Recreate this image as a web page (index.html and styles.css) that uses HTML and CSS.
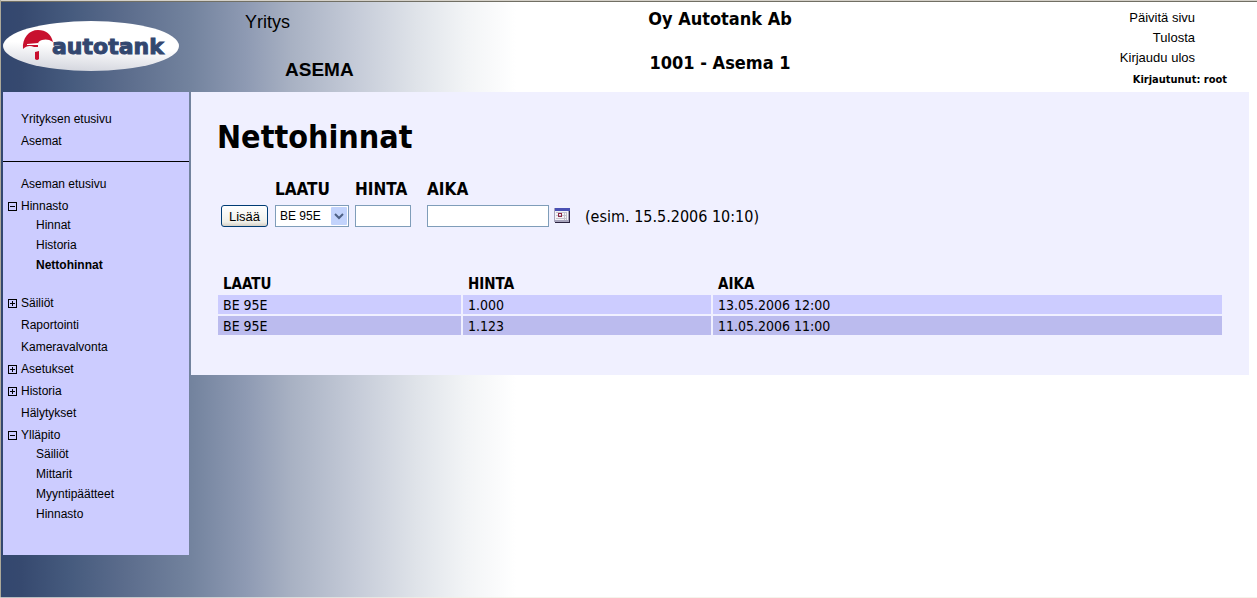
FILE: index.html
```html
<!DOCTYPE html>
<html lang="fi">
<head>
<meta charset="utf-8">
<meta name="viewport" content="width=device-width, initial-scale=1">
<title>Nettohinnat - Autotank</title>
<link rel="stylesheet" href="styles.css">
</head>
<body>
<header class="header">
  <a class="logo" href="#" aria-label="Autotank">
    <svg width="176" height="50" viewBox="0 0 176 50">
      <defs>
        <linearGradient id="shade" x1="0.6" y1="0" x2="0.4" y2="1">
          <stop offset="0.5" stop-color="#fff"/>
          <stop offset="1" stop-color="#d4d6de"/>
        </linearGradient>
      </defs>
      <ellipse cx="88" cy="25" rx="88" ry="25" fill="url(#shade)"/>
      <path d="M20 28C19 17 26 9 35 9C43 9 48 13 50 21C46 18 42 18 39 19C36 20 35 21 35 23L35 26L31 26C27 24 23 25 20 28Z" fill="#c8102e"/>
      <path d="M24 23L35 22L35 24L24 24Z" fill="#fff"/>
      <path d="M32 31L36 30L36 38Q34 40 32 38Z" fill="#c8102e"/>
      <text class="logo-text" x="49" y="33">autotank</text>
    </svg>
  </a>
  <div class="labels">
    <span class="label-company">Yritys</span>
    <span class="label-station">ASEMA</span>
  </div>
  <div class="names">
    <span>Oy Autotank Ab</span>
    <span>1001 - Asema 1</span>
  </div>
  <div class="session">
    <a href="#">Päivitä sivu</a>
    <a href="#">Tulosta</a>
    <a href="#">Kirjaudu ulos</a>
    <strong class="user">Kirjautunut: root</strong>
  </div>
</header>
<div class="layout">
  <nav class="sidebar">
    <ul class="menu menu-top">
      <li><a href="#">Yrityksen etusivu</a></li>
      <li><a href="#">Asemat</a></li>
    </ul>
    <ul class="menu">
      <li><a href="#">Aseman etusivu</a></li>
      <li><a class="node open" href="#">Hinnasto</a>
        <ul class="submenu">
          <li><a href="#">Hinnat</a></li>
          <li><a href="#">Historia</a></li>
          <li><a class="current" href="#">Nettohinnat</a></li>
        </ul>
      </li>
      <li><a class="node closed" href="#">Säiliöt</a></li>
      <li><a href="#">Raportointi</a></li>
      <li><a href="#">Kameravalvonta</a></li>
      <li><a class="node closed" href="#">Asetukset</a></li>
      <li><a class="node closed" href="#">Historia</a></li>
      <li><a href="#">Hälytykset</a></li>
      <li><a class="node open" href="#">Ylläpito</a>
        <ul class="submenu">
          <li><a href="#">Säiliöt</a></li>
          <li><a href="#">Mittarit</a></li>
          <li><a href="#">Myyntipäätteet</a></li>
          <li><a href="#">Hinnasto</a></li>
        </ul>
      </li>
    </ul>
  </nav>
  <main class="content">
    <h1>Nettohinnat</h1>
    <form class="price-form">
      <button class="add" type="button">Lisää</button>
      <div class="field field-grade">
        <label for="grade">LAATU</label>
        <span class="select-box">
          <select id="grade"><option>BE 95E</option></select>
          <svg class="arrow" width="16" height="18" viewBox="0 0 16 18">
            <rect width="16" height="18" rx="1" fill="#c2d3fc"/>
            <path d="M4 7L8 11L12 7" fill="none" stroke="#4d6185" stroke-width="2"/>
          </svg>
        </span>
      </div>
      <div class="field field-price">
        <label for="price">HINTA</label>
        <input id="price" type="text">
      </div>
      <div class="field field-time">
        <label for="time">AIKA</label>
        <input id="time" type="text">
      </div>
      <button class="calendar" type="button" aria-label="Kalenteri">
        <svg width="16" height="15" viewBox="0 0 16 15" shape-rendering="crispEdges">
          <rect x="1" y="1" width="15" height="14" fill="#2c2440"/>
          <rect width="15" height="14" fill="#a8a4bc"/>
          <rect x="1" y="3" width="13" height="9" fill="#f4f2f6"/>
          <rect x="1" width="15" height="3" fill="#4a50b4"/>
          <path d="M2 4H13M2 7H13M2 10H13M10 4V12M12 4V12" stroke="#c4c0cc"/>
          <path d="M4 5H8V9H4ZM5 6V8H7V6Z" fill="#8c2848" fill-rule="evenodd"/>
        </svg>
      </button>
      <span class="hint">(esim. 15.5.2006 10:10)</span>
    </form>
    <table class="prices">
      <colgroup><col class="col-grade"><col class="col-price"><col></colgroup>
      <thead>
        <tr><th scope="col">LAATU</th><th scope="col">HINTA</th><th scope="col">AIKA</th></tr>
      </thead>
      <tbody>
        <tr><td>BE 95E</td><td>1.000</td><td>13.05.2006 12:00</td></tr>
        <tr><td>BE 95E</td><td>1.123</td><td>11.05.2006 11:00</td></tr>
      </tbody>
    </table>
  </main>
</div>
</body>
</html>
```
FILE: styles.css
```css
*,
*::before {
  box-sizing: border-box;
}

html {
  min-height: 100%;
  background: linear-gradient(to right, #33476f 0, #36496f 20px, #465b7e 70px, #5a6b8b 120px, #73839e 190px, #8e9ab3 245px, #a8b1c3 290px, #c5cbd8 355px, #dfe3e9 415px, #f2f4f6 465px, #fff 515px);
  border-left: 1px solid #aca899;
  border-bottom: 1px solid rgba(241, 239, 226, 0.7);
}

body {
  margin: 0;
  border-top: 1px solid #d4d0c8;
  font-family: "DejaVu Sans Condensed", "DejaVu Sans", sans-serif;
  font-size: 16px;
  color: #000;
}

a {
  color: inherit;
  text-decoration: none;
}

ul {
  list-style: none;
  margin: 0;
  padding: 0;
}

.header {
  display: grid;
  grid-template-columns: 242px 23fr 402px 28fr;
  height: 91px;
  border-top: 1px solid #716f64;
}

.logo {
  padding: 19px 0 0 2px;
}

.logo svg {
  display: block;
}

.logo-text {
  font: 900 22px "DejaVu Sans", sans-serif;
  fill: #33476f;
  stroke: #33476f;
  stroke-width: 1px;
}

.labels {
  display: flex;
  flex-direction: column;
  gap: 28px;
  padding: 10px 0 0 2px;
  font: 18px/20px "Liberation Sans", Arial, sans-serif;
}

.label-station {
  padding-left: 40px;
  font-size: 19px;
  font-weight: bold;
}

.names {
  display: flex;
  flex-direction: column;
  align-items: center;
  gap: 24px;
  padding-top: 7px;
  font-size: 18px;
  font-weight: bold;
  line-height: 20px;
}

.session {
  display: flex;
  flex-direction: column;
  align-items: flex-end;
  padding: 6px 62px 0 0;
  font: 13px/20px "Liberation Sans", Arial, sans-serif;
}

.user {
  margin-right: -32px;
  font: bold 11px/24px "DejaVu Sans Condensed", "DejaVu Sans", sans-serif;
}

.layout {
  display: flex;
  align-items: flex-start;
  gap: 2px;
  padding: 0 8px 42px 2px;
}

.sidebar {
  flex: none;
  width: 186px;
  padding-bottom: 31px;
  background: #ccccff;
  font: 12px/22px "Liberation Sans", Arial, sans-serif;
}

.menu {
  padding: 11px 0 0 18px;
}

.menu-top {
  padding: 16px 0 9px 18px;
  border-bottom: 1px solid #000;
}

.menu a {
  display: block;
}

.submenu {
  margin-top: -2px;
  padding: 0 0 17px 15px;
  line-height: 20px;
}

.menu > li:last-child .submenu {
  padding-bottom: 0;
}

.menu .node {
  margin-left: -13px;
  padding-left: 13px;
  background: linear-gradient(#000, #000) 2px 11px / 5px 1px no-repeat;
  position: relative;
}

.node::before {
  content: "";
  position: absolute;
  left: 0;
  top: 7px;
  width: 9px;
  height: 9px;
  border: 1px solid #000;
}

.menu .closed {
  background: linear-gradient(#000, #000) 2px 11px / 5px 1px no-repeat, linear-gradient(#000, #000) 4px 9px / 1px 5px no-repeat;
}

.current {
  font-weight: bold;
}

.content {
  flex: 1;
  min-width: 0;
  padding: 24px 25px 38px;
  background: #f0f0ff;
}

h1 {
  margin: 0 0 20px 1px;
  font-size: 32px;
  line-height: 42px;
}

.price-form {
  display: flex;
  align-items: flex-end;
  padding-left: 5px;
  margin-bottom: 45px;
}

.field {
  display: flex;
  flex-direction: column;
  gap: 5px;
}

.field label {
  font-size: 17px;
  font-weight: bold;
  line-height: 22px;
}

.field input,
.field select {
  width: 100%;
  height: 22px;
  margin: 0;
  border: 1px solid #7f9db9;
  background: #fff;
  font: 12px "Liberation Sans", Arial, sans-serif;
}

.field select {
  appearance: none;
  padding: 0 0 0 4px;
  border-radius: 0;
  color: #000;
}

.select-box {
  display: flex;
  position: relative;
}

.arrow {
  position: absolute;
  top: 2px;
  right: 2px;
  pointer-events: none;
}

.add {
  width: 47px;
  height: 22px;
  margin-right: 7px;
  padding: 0;
  border: 1px solid #003c74;
  border-radius: 3px;
  background: linear-gradient(#fff, #f0f0ea 80%, #d6d0c5);
  color: #000;
  font: 13px "Liberation Sans", Arial, sans-serif;
}

.field-grade {
  width: 74px;
  margin-right: 6px;
}

.field-price {
  width: 56px;
  margin-right: 16px;
}

.field-time {
  width: 122px;
  margin-right: 5px;
}

.calendar {
  margin: 0 15px 4px 0;
  padding: 0;
  border: 0;
  background: none;
}

.calendar svg {
  display: block;
}

.hint {
  line-height: 20px;
}

.prices {
  width: 100%;
  table-layout: fixed;
  border-spacing: 2px;
  font-size: 14px;
  line-height: 17px;
}

.prices th,
.prices td {
  padding: 2px 5px 0;
  text-align: left;
}

.prices th {
  font-size: 15px;
}

.col-grade {
  width: 243px;
}

.col-price {
  width: 248px;
}

.prices td {
  background: #ccccff;
}

.prices tr:nth-child(even) td {
  background: #bbbbee;
}
```
